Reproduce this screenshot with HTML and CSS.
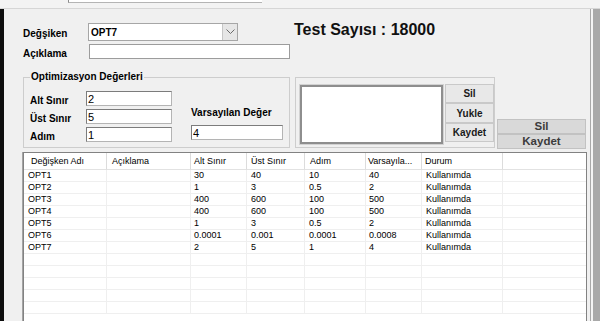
FILE: index.html
```html
<!DOCTYPE html>
<html lang="tr">
<head>
    <meta charset="UTF-8">
    <meta name="viewport" content="width=device-width, initial-scale=1.0">
    <title>Optimizasyon</title>
    <link rel="stylesheet" href="styles.css">
</head>
<body>

    <div class="topstrip"><div class="topfield"></div></div>

    <div class="window">
        <div class="edge-left"></div>

        <div class="panel">
            <div class="row row-var">
                <label class="lbl" for="variable">Değşiken</label>
                <div class="combo" id="variable">
                    <span class="combo-text">OPT7</span>
                    <span class="combo-btn">
                        <svg width="9" height="6" viewBox="0 0 9 6"><polyline points="0.5,0.5 4.5,4.5 8.5,0.5" fill="none" stroke="#6a6a6a" stroke-width="1"/></svg>
                    </span>
                </div>
                <div class="test-count">Test Sayısı : 18000</div>
            </div>

            <div class="row row-desc">
                <label class="lbl" for="desc">Açıklama</label>
                <input type="text" class="field field-desc" id="desc">
            </div>

            <div class="row-groups">
                <fieldset class="group group-opt">
                    <legend>Optimizasyon Değerleri</legend>
                    <div class="opt-body">
                        <div class="opt-grid">
                            <label for="min">Alt Sınır</label>
                            <input type="text" class="field" id="min" value="2">
                            <label for="max">Üst Sınır</label>
                            <input type="text" class="field" id="max" value="5">
                            <label for="step">Adım</label>
                            <input type="text" class="field" id="step" value="1">
                        </div>
                        <div class="opt-default">
                            <label for="def">Varsayılan Değer</label>
                            <input type="text" class="field" id="def" value="4">
                        </div>
                    </div>
                </fieldset>

                <fieldset class="group group-list">
                    <div class="listbox"></div>
                    <div class="list-buttons">
                        <button>Sil</button>
                        <button>Yukle</button>
                        <button>Kaydet</button>
                    </div>
                </fieldset>

                <div class="side-buttons">
                    <button>Sil</button>
                    <button>Kaydet</button>
                </div>
            </div>

            <div class="grid">
                <table>
                    <thead>
                        <tr>
                            <th>Değişken Adı</th>
                            <th>Açıklama</th>
                            <th>Alt Sınır</th>
                            <th>Üst Sınır</th>
                            <th>Adım</th>
                            <th>Varsayıla...</th>
                            <th>Durum</th>
                            <th></th>
                        </tr>
                    </thead>
                    <tbody>
                        <tr><td>OPT1</td><td></td><td>30</td><td>40</td><td>10</td><td>40</td><td>Kullanımda</td><td></td></tr>
                        <tr><td>OPT2</td><td></td><td>1</td><td>3</td><td>0.5</td><td>2</td><td>Kullanımda</td><td></td></tr>
                        <tr><td>OPT3</td><td></td><td>400</td><td>600</td><td>100</td><td>500</td><td>Kullanımda</td><td></td></tr>
                        <tr><td>OPT4</td><td></td><td>400</td><td>600</td><td>100</td><td>500</td><td>Kullanımda</td><td></td></tr>
                        <tr><td>OPT5</td><td></td><td>1</td><td>3</td><td>0.5</td><td>2</td><td>Kullanımda</td><td></td></tr>
                        <tr><td>OPT6</td><td></td><td>0.0001</td><td>0.001</td><td>0.0001</td><td>0.0008</td><td>Kullanımda</td><td></td></tr>
                        <tr><td>OPT7</td><td></td><td>2</td><td>5</td><td>1</td><td>4</td><td>Kullanımda</td><td></td></tr>
                        <tr class="empty"><td></td><td></td><td></td><td></td><td></td><td></td><td></td><td></td></tr>
                        <tr class="empty"><td></td><td></td><td></td><td></td><td></td><td></td><td></td><td></td></tr>
                        <tr class="empty"><td></td><td></td><td></td><td></td><td></td><td></td><td></td><td></td></tr>
                        <tr class="empty"><td></td><td></td><td></td><td></td><td></td><td></td><td></td><td></td></tr>
                        <tr class="empty"><td></td><td></td><td></td><td></td><td></td><td></td><td></td><td></td></tr>
                    </tbody>
                </table>
            </div>
        </div>

        <div class="edge-right"></div>
    </div>

</body>
</html>
```

FILE: styles.css
```css
* {
    box-sizing: border-box;
}
html, body {
    margin: 0;
}
body {
    width: 600px;
    height: 321px;
    overflow: hidden;
    background: #f0f0f0;
    font-family: "Liberation Sans", Arial, sans-serif;
    font-size: 10px;
    color: #000;
}

/* strip of the window behind */
.topstrip {
    height: 9px;
    background: #f3f3f3;
    border-bottom: 1px solid #d6d6d6;
}
.topfield {
    margin-left: 68px;
    width: 194px;
    height: 3px;
    background: #fff;
    border-left: 1px solid #8c8c8c;
    border-bottom: 1px solid #b4b4b4;
}

.window {
    display: flex;
    height: 312px;
}
.edge-left {
    width: 4px;
    background: #0d0d0d;
}
.panel {
    width: 587px;
    padding: 14px 0 0 19px;
    border-right: 1px solid #a8a8a8;
    overflow: hidden;
}
.edge-right {
    flex: 1;
    background: linear-gradient(to right, #f4f4f4 2px, #a9a9a9 2px);
}

/* top rows */
.row {
    display: flex;
    align-items: center;
}
.row-var {
    height: 18px;
}
.row-desc {
    height: 15px;
    margin-top: 3px;
}
.lbl {
    width: 65px;
    padding-top: 3px;
    font-weight: bold;
}
.combo {
    display: flex;
    width: 150px;
    height: 18px;
    background: #fff;
    border: 1px solid #a6a6a6;
}
.combo-text {
    flex: 1;
    padding: 1px 0 0 2px;
    font-weight: bold;
    line-height: 15px;
}
.combo-btn {
    width: 15px;
    display: flex;
    align-items: center;
    justify-content: center;
    background: #e6e6e6;
    border-left: 1px solid #c6c6c6;
}
.test-count {
    align-self: flex-start;
    margin: -1px 0 0 56px;
    font-size: 16px;
    line-height: 16px;
    font-weight: bold;
    color: #111;
}

.field {
    height: 15px;
    margin: 0;
    padding: 0 1px;
    background: #fff;
    border: 1px solid #b4b4b4;
    border-top-color: #7c7c7c;
    border-left-color: #7c7c7c;
    font-family: inherit;
    font-size: 11px;
    color: #000;
    outline: none;
}
.field-desc {
    width: 201px;
    margin-left: 1px;
    border-color: #9c9c9c;
}

/* group boxes */
.row-groups {
    display: flex;
    margin-top: 12px;
}
.group {
    margin: 0;
    border: 1px solid #cdcdcd;
    min-inline-size: 0;
}
.group-opt {
    width: 267px;
    padding: 8px 6px 5px;
}
.group-opt legend {
    padding: 0 1px;
    font-weight: bold;
    line-height: 12px;
}
.opt-body {
    display: flex;
    align-items: flex-end;
}
.opt-grid {
    display: grid;
    grid-template-columns: 56px 86px;
    row-gap: 3px;
    align-items: center;
}
.opt-grid label {
    padding-top: 3px;
    font-weight: bold;
}
.opt-default {
    display: flex;
    flex-direction: column;
    margin: 0 0 2px 19px;
}
.opt-default label {
    margin-bottom: 6px;
    padding-top: 1px;
    line-height: 12px;
    font-weight: bold;
}
.opt-default .field {
    width: 92px;
}

.group-list {
    display: flex;
    align-self: flex-start;
    width: 200px;
    margin: 6px 0 0 5px;
    padding: 6px 0 2px 3px;
}
.listbox {
    width: 145px;
    height: 61px;
    background: #fff;
    border: 1px solid #d2d2d2;
    box-shadow: inset 0 0 0 2px #8e8e8e;
}
.list-buttons {
    display: flex;
    flex-direction: column;
    width: 49px;
    margin-left: 1px;
}

button {
    margin: 0;
    padding: 0;
    font-family: inherit;
    font-weight: bold;
    color: #1a1a1a;
    cursor: default;
}
.list-buttons button {
    height: 19px;
    font-size: 10px;
    background: #e8e8e8;
    border: 1px solid #c9c9c9;
}
.list-buttons button:nth-child(2) {
    height: 20px;
}
.side-buttons {
    display: flex;
    flex-direction: column;
    align-self: flex-end;
    width: 89px;
    margin: 0 0 -1px 2px;
}
.side-buttons button {
    height: 15px;
    font-size: 11.5px;
    line-height: 13px;
    color: #3c3c3c;
    background: #d9d9d9;
    border: 1px solid #c2c2c2;
}

/* list view */
.grid {
    width: 564px;
    height: 169px;
    margin-top: 4px;
    overflow: hidden;
    background: #fff;
    border: 1px solid #828282;
    border-bottom: none;
    box-shadow: -1px 0 0 #a4a4a4;
}
table {
    width: 100%;
    border-collapse: separate;
    border-spacing: 0;
    table-layout: fixed;
    font-size: 9px;
}
th {
    height: 17px;
    padding: 0 0 0 5px;
    line-height: 16px;
    font-weight: normal;
    text-align: left;
    white-space: nowrap;
    overflow: hidden;
    border-right: 1px solid #dcdcdc;
    border-bottom: 1px solid #e2e2e2;
}
th:nth-child(1) { width: 83px; padding-left: 7px; }
th:nth-child(2) { width: 84px; }
th:nth-child(3) { width: 56px; padding-left: 3px; }
th:nth-child(4) { width: 58px; padding-left: 4px; }
th:nth-child(5) { width: 61px; }
th:nth-child(6) { width: 56px; padding-left: 2px; }
th:nth-child(7) { width: 81px; padding-left: 3px; }
th:last-child { border-right: none; }
td {
    height: 12px;
    padding: 0 0 0 4px;
    line-height: 11px;
    white-space: nowrap;
    overflow: hidden;
    border-right: 1px solid #efefef;
    border-bottom: 1px solid #efefef;
}
td:nth-child(3), td:nth-child(6) {
    padding-left: 3px;
}
td:last-child {
    border-right: none;
}
```
